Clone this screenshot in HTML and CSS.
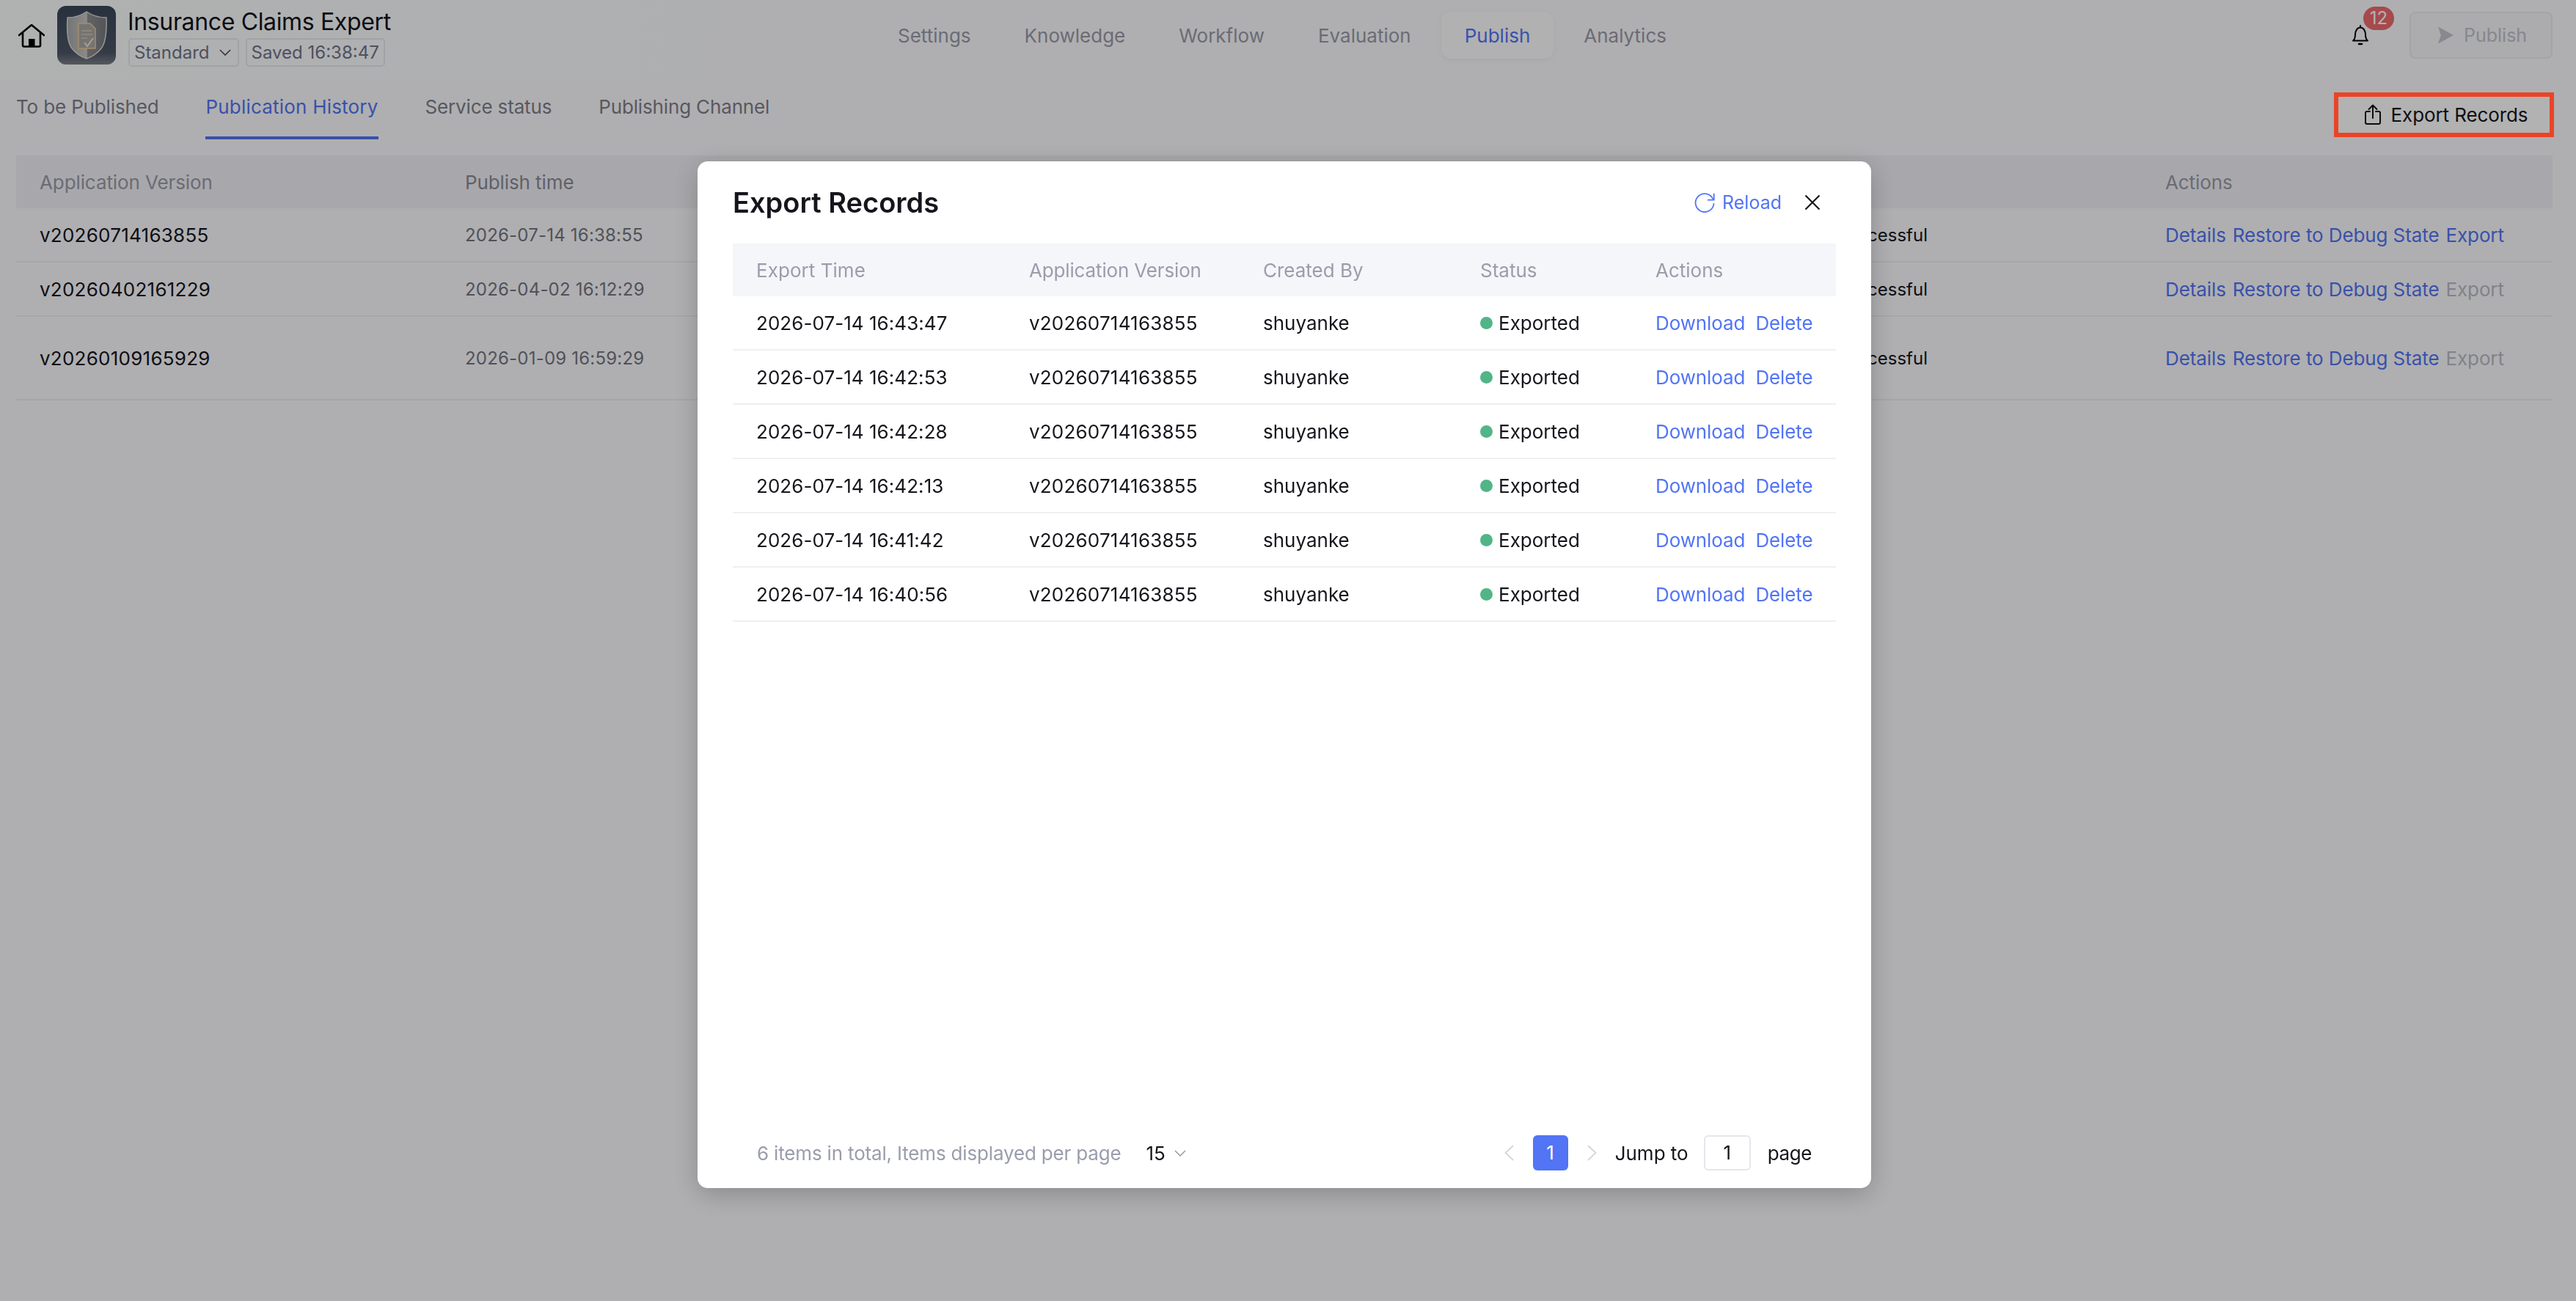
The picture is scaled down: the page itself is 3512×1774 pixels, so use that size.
FILE: index.html
```html
<!DOCTYPE html>
<html lang="en">
<head>
<meta charset="utf-8">
<title>Export Records</title>
<link rel="stylesheet" href="styles.css">
</head>
<body>
<div class="page">
  <header class="topbar">
    <div class="brand">
      <svg class="home" viewBox="0 0 36 32" fill="none" stroke="#000" stroke-width="2.6" stroke-linejoin="round" stroke-linecap="round"><path d="M1 15 18 1l17 14"/><path d="M6 12v16.500q0 2 2 2h20q2 0 2-2V12"/><rect x="14" y="20" width="8.500" height="10" fill="#000" stroke="none"/></svg>
      <svg class="logo" viewBox="0 0 80 80">
        <defs>
          <linearGradient id="lb" x1="0" y1="0" x2="0" y2="1"><stop offset="0" stop-color="#3a4658"/><stop offset=".8" stop-color="#4c5666"/><stop offset="1" stop-color="#7b7f88"/></linearGradient>
          <linearGradient id="ls" x1="0" y1="0" x2="1" y2="0"><stop offset="0" stop-color="#a8a8a8"/><stop offset=".5" stop-color="#c9c6c2"/><stop offset=".52" stop-color="#8e8e90"/><stop offset="1" stop-color="#77797e"/></linearGradient>
        </defs>
        <rect width="80" height="80" rx="12" fill="url(#lb)"/>
        <path d="M40 8Q52 16 67 16 68 48 60 58 52 68 40 72 28 68 20 58 12 48 14 16 28 16 40 8Z" fill="url(#ls)" stroke="#d8d8d8" stroke-width="1.500"/>
        <path d="M29 24h16l7 7v27H29Z" fill="#a9a6a2" stroke="#e8c9a0" stroke-width="1.500"/>
        <path d="M33 34h14M33 39h15M33 44h8" stroke="#e8d5bc" stroke-width="1.200"/>
        <path d="M37 50l4 5 8-11" fill="none" stroke="#f1e4d2" stroke-width="2"/>
      </svg>
      <div class="brand-text">
        <div class="app-name">Insurance Claims Expert</div>
        <div class="tags">
          <span class="tag">Standard<svg class="tag-chev" viewBox="0 0 18 10" fill="none" stroke="#4c4c55" stroke-width="1.800"><path d="M1 1l8 8 8-8"/></svg></span>
          <span class="tag tag-saved">Saved 16:38:47</span>
        </div>
      </div>
    </div>
    <nav class="nav">
      <a class="nav-item">Settings</a>
      <a class="nav-item">Knowledge</a>
      <a class="nav-item">Workflow</a>
      <a class="nav-item">Evaluation</a>
      <a class="nav-item nav-active">Publish</a>
      <a class="nav-item">Analytics</a>
    </nav>
    <div class="top-right">
      <div class="bell-wrap">
        <svg class="bell" viewBox="0 0 24 28" fill="none" stroke="#000" stroke-width="2" stroke-linejoin="round" stroke-linecap="round"><path d="M2 21.500c2.500-2 3-4 3-8.500 0-5 3-9.500 7-9.500s7 4.500 7 9.500c0 4.500.5 6.500 3 8.500Z"/><path d="M12 1v2.500"/><path d="M10 26h4" stroke-width="2.600"/></svg>
        <span class="badge">12</span>
      </div>
      <button class="publish-btn"><svg class="send" viewBox="0 0 22 24"><path d="M0 0 22 12 0 24l4-12Z" fill="#c3c5cc"/></svg>Publish</button>
    </div>
  </header>

  <div class="tabbar">
    <div class="tabs">
      <a class="tab">To be Published</a>
      <a class="tab tab-active">Publication History</a>
      <a class="tab">Service status</a>
      <a class="tab">Publishing Channel</a>
    </div>
    <button class="export-btn"><svg class="share" viewBox="0 0 22 28" fill="none" stroke="#111" stroke-width="2" stroke-linejoin="round" stroke-linecap="round"><path d="M7 10H3q-2 0-2 2v13q0 2 2 2h16q2 0 2-2V12q0-2-2-2h-4"/><path d="M11 19V1.500M5.500 7 11 1.500 16.500 7"/></svg>Export Records</button>
  </div>

  <div class="bg-table">
    <div class="bg-row bg-head"><span>Application Version</span><span class="c-muted">Publish time</span><span></span><span>Actions</span></div>
    <div class="bg-row"><span class="ver">v20260714163855</span><span class="c-time">2026-07-14 16:38:55</span><span class="c-status">Successful</span><span class="acts"><a>Details</a><a>Restore to Debug State</a><a>Export</a></span></div>
    <div class="bg-row"><span class="ver">v20260402161229</span><span class="c-time">2026-04-02 16:12:29</span><span class="c-status">Successful</span><span class="acts"><a>Details</a><a>Restore to Debug State</a><a class="off">Export</a></span></div>
    <div class="bg-row bg-tall"><span class="ver">v20260109165929</span><span class="c-time">2026-01-09 16:59:29</span><span class="c-status">Successful</span><span class="acts"><a>Details</a><a>Restore to Debug State</a><a class="off">Export</a></span></div>
  </div>
</div>

<div class="mask">
  <section class="modal">
    <div class="modal-head">
      <h2 class="modal-title">Export Records</h2>
      <a class="reload"><svg class="reload-ico" viewBox="0 0 28 28" fill="none" stroke="#5274f5" stroke-width="1.800" stroke-linecap="round" stroke-linejoin="round"><path d="M25.500 9.500A12.500 12.500 0 1 0 26.500 16"/><path d="M26.700 2.500V10.700H18.700"/></svg>Reload</a>
      <svg class="close" viewBox="0 0 22 22" fill="none" stroke="#15151c" stroke-width="2.200"><path d="M1.500 1.500l19 19M20.500 1.500l-19 19"/></svg>
    </div>
    <div class="rec-table">
      <div class="rec-row rec-head"><span>Export Time</span><span>Application Version</span><span>Created By</span><span>Status</span><span>Actions</span></div>
      <div class="rec-row"><span>2026-07-14 16:43:47</span><span>v20260714163855</span><span>shuyanke</span><span class="st"><i class="dot"></i>Exported</span><span class="rec-acts"><a>Download</a><a>Delete</a></span></div>
      <div class="rec-row"><span>2026-07-14 16:42:53</span><span>v20260714163855</span><span>shuyanke</span><span class="st"><i class="dot"></i>Exported</span><span class="rec-acts"><a>Download</a><a>Delete</a></span></div>
      <div class="rec-row"><span>2026-07-14 16:42:28</span><span>v20260714163855</span><span>shuyanke</span><span class="st"><i class="dot"></i>Exported</span><span class="rec-acts"><a>Download</a><a>Delete</a></span></div>
      <div class="rec-row"><span>2026-07-14 16:42:13</span><span>v20260714163855</span><span>shuyanke</span><span class="st"><i class="dot"></i>Exported</span><span class="rec-acts"><a>Download</a><a>Delete</a></span></div>
      <div class="rec-row"><span>2026-07-14 16:41:42</span><span>v20260714163855</span><span>shuyanke</span><span class="st"><i class="dot"></i>Exported</span><span class="rec-acts"><a>Download</a><a>Delete</a></span></div>
      <div class="rec-row"><span>2026-07-14 16:40:56</span><span>v20260714163855</span><span>shuyanke</span><span class="st"><i class="dot"></i>Exported</span><span class="rec-acts"><a>Download</a><a>Delete</a></span></div>
    </div>
    <footer class="pager">
      <span class="total">6 items in total, Items displayed per page</span>
      <span class="size">15<svg class="size-chev" viewBox="0 0 16 9" fill="none" stroke="#9a9aa8" stroke-width="1.500"><path d="M1 1l7 7 7-7"/></svg></span>
      <svg class="arrow arrow-prev" viewBox="0 0 13 22" fill="none" stroke="#d3d5dc" stroke-width="1.800"><path d="M12 1 1.500 11 12 21"/></svg>
      <span class="page-cur">1</span>
      <svg class="arrow arrow-next" viewBox="0 0 13 22" fill="none" stroke="#d3d5dc" stroke-width="1.800"><path d="M1 1l10.500 10L1 21"/></svg>
      <span class="jump">Jump to</span>
      <span class="page-input">1</span>
      <span class="page-word">page</span>
    </footer>
  </section>
  <div class="callout" aria-hidden="true"></div>
</div>
</body>
</html>
```

FILE: styles.css
```css
* { box-sizing: border-box; }
html, body { margin: 0; height: 100%; }
body {
  font-family: Inter, "Liberation Sans", sans-serif;
  font-size: 26px;
  color: #15151c;
  background: #fbfbfe;
  overflow: hidden;
}
a { color: #5274f5; text-decoration: none; }
button { font: inherit; }

.page {
  height: 1774px;
  background: linear-gradient(100deg, #fbfffe 0, #fbfbfe 30%) top / 100% 110px no-repeat, #fbfbfe;
}

.topbar {
  display: grid;
  grid-template-columns: 1192px auto 1fr;
  align-items: center;
  height: 96px;
  padding-right: 32px;
}
.brand { display: flex; align-items: center; padding-left: 25px; }
.home { width: 36px; height: 32px; margin-top: 2px; }
.logo { width: 80px; height: 80px; margin-left: 17px; }
.brand-text { margin-left: 16px; display: flex; flex-direction: column; padding-top: 5px; }
.app-name { font-size: 32px; line-height: 40px; letter-spacing: -.35px; color: #12121a; }
.tags { display: flex; gap: 9px; margin-top: 2px; margin-left: 1px; }
.tag {
  display: flex;
  align-items: center;
  height: 39px;
  padding: 0 9px 0 6px;
  border: 2px solid #e8e8ee;
  border-radius: 5px;
  font-size: 24px;
  color: #70738a;
}
.tag-chev { width: 16px; height: 9px; margin-left: 13px; }
.tag-saved { padding: 0 6px; }

.nav { display: flex; gap: 9px; align-items: center; }
.nav-item {
  height: 64px;
  display: flex;
  align-items: center;
  padding: 0 32px;
  border-radius: 14px;
  font-size: 26px;
  color: #9a9aa8;
}
.nav-active {
  color: #5274f5;
  background: #fefeff;
  box-shadow: 0 2px 10px rgba(20, 20, 60, .05);
}

.top-right { display: flex; justify-content: flex-end; align-items: center; }
.bell-wrap { position: relative; width: 24px; height: 28px; margin-right: 55px; }
.bell { width: 24px; height: 28px; display: block; }
.badge {
  position: absolute;
  left: 16px;
  top: -25px;
  width: 42px;
  height: 32px;
  border-radius: 16px;
  background: #ee6a6d;
  color: #fff;
  font-size: 24px;
  line-height: 32px;
  text-align: center;
}
.publish-btn {
  display: flex;
  align-items: center;
  width: 195px;
  height: 64px;
  padding: 0 0 0 37px;
  border: 2px solid #ebebf0;
  border-radius: 8px;
  background: #f6f6f9;
  color: #c0c2cc;
  font-size: 25px;
}
.send { width: 21px; height: 24px; margin-right: 14px; }

.tabbar {
  display: flex;
  justify-content: space-between;
  align-items: flex-start;
  height: 116px;
  padding: 0 32px 0 22px;
}
.tabs { display: flex; gap: 64px; }
.tab {
  height: 94px;
  padding-top: 34px;
  border-bottom: 4px solid transparent;
  font-size: 26px;
  line-height: 32px;
  letter-spacing: -.15px;
  color: #7e7e8c;
}
.tab-active { color: #5274f5; border-bottom-color: #5274f5; letter-spacing: .2px; }
.export-btn {
  display: flex;
  align-items: center;
  justify-content: center;
  width: 296px;
  height: 58px;
  margin-top: 31px;
  padding-left: 12px;
  border: 0;
  background: #fff;
  color: #15151c;
  font-size: 26px;
  letter-spacing: -.1px;
}
.share { width: 22px; height: 28px; margin-right: 14px; }

.bg-table { margin: 0 32px 0 22px; }
.bg-row {
  display: grid;
  grid-template-columns: 580px 1845px 473px 1fr;
  align-items: center;
  height: 74px;
  padding-left: 32px;
  border-bottom: 2px solid #eeeef3;
}
.bg-head {
  height: 72px;
  background: #f1f1f6;
  border-bottom: 0;
  color: #9a9aa8;
  letter-spacing: -.1px;
}
.c-muted { color: #8a8a98; }
.bg-tall { height: 114px; }
.ver { font-size: 26px; letter-spacing: .25px; color: #15151c; }
.c-time { font-size: 24px; letter-spacing: .2px; color: #757580; }
.c-status { font-size: 24px; color: #15151c; text-align: right; padding-right: 324px; }
.acts { display: flex; gap: 9px; white-space: nowrap; font-size: 26px; letter-spacing: -.1px; }
.acts .off { color: #b9bbc6; }

.mask {
  position: fixed;
  inset: 0;
  padding: 220px 0 0 951px;
  background: rgba(0, 0, 0, .3);
}
.modal {
  display: flex;
  flex-direction: column;
  width: 1600px;
  height: 1400px;
  padding: 0 48px;
  border-radius: 14px;
  background: #fff;
  box-shadow: 0 8px 36px rgba(0, 0, 0, .22);
}
.modal-head {
  display: flex;
  align-items: center;
  height: 112px;
  flex: none;
}
.modal-title { flex: 1; margin: 0; font-size: 38px; font-weight: 600; color: #15151c; }
.reload { display: flex; align-items: center; font-size: 25px; margin-right: 31px; }
.reload-ico { width: 28px; height: 28px; margin-right: 10px; }
.close { width: 22px; height: 22px; margin-right: 21px; }

.rec-table { flex: 1; }
.rec-row {
  display: grid;
  grid-template-columns: 372px 319px 296px 239px 1fr;
  align-items: center;
  height: 74px;
  padding-left: 32px;
  border-bottom: 2px solid #eff0f3;
  font-size: 26px;
}
.rec-row > span:nth-child(1) { letter-spacing: .05px; }
.rec-row > span:nth-child(2) { letter-spacing: .2px; }
.rec-head {
  height: 72px;
  border-bottom: 0;
  background: #f5f6f9;
  color: #9a9dac;
}
.rec-head > span:nth-child(2) { letter-spacing: -.15px; }
.st { display: flex; align-items: center; }
.dot { width: 17px; height: 17px; margin-right: 8px; border-radius: 50%; background: #51b587; }
.rec-acts { display: flex; gap: 14px; white-space: nowrap; letter-spacing: -.1px; }

.pager {
  display: flex;
  align-items: center;
  height: 48px;
  margin-bottom: 24px;
  padding-left: 33px;
  flex: none;
}
.total { color: #9a9dac; font-size: 26px; letter-spacing: -.17px; }
.size { display: flex; align-items: center; margin-left: 34px; flex: 1; }
.size-chev { width: 16px; height: 9px; margin-left: 12px; }
.arrow { width: 13px; height: 22px; }
.page-cur {
  width: 48px;
  height: 48px;
  margin-left: 26px;
  border-radius: 6px;
  background: #5274f5;
  color: #fff;
  line-height: 48px;
  text-align: center;
}
.arrow-next { margin-left: 26px; }
.jump { margin-left: 25px; }
.page-input {
  width: 64px;
  height: 48px;
  margin-left: 21px;
  border: 2px solid #e6e6ec;
  border-radius: 6px;
  line-height: 44px;
  text-align: center;
}
.page-word { margin-left: 23px; margin-right: 33px; letter-spacing: -.4px; }

.callout {
  position: absolute;
  left: 3182px;
  top: 126px;
  width: 300px;
  height: 61px;
  border: 6px solid #ea4427;
}
```
